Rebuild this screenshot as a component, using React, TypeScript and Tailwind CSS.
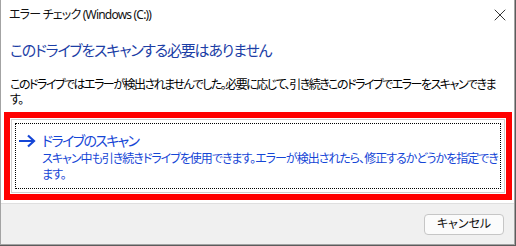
import { X } from 'lucide-react'

function Arrow() {
  return (
    <svg width="18" height="14" viewBox="0 0 18 14" className="shrink-0 mt-[4px]">
      <path d="M1 7h15M10 1.5L16 7l-6 5.5" fill="none" stroke="#1546d6" strokeWidth="2.2" />
    </svg>
  )
}

export default function App() {
  return (
    <div className="w-[516px] h-[246px] overflow-hidden bg-[#5c5c5c] font-['Noto_Sans','Noto_Sans_CJK_JP',sans-serif] [font-feature-settings:'palt'] text-black">
      <div className="w-[515px] h-[245px] bg-white border-l border-r border-b border-[#a3a3a3] flex flex-col">
        {/* title bar */}
        <div className="h-[30px] shrink-0 flex items-center justify-between pl-[8px] pr-[4px]">
          <span className="text-[12px] leading-none tracking-[-0.8px] text-[#111]">エラー チェック (Windows (C:))</span>
          <X className="w-[20px] h-[20px] text-[#222]" strokeWidth={1.1} />
        </div>

        {/* content */}
        <div className="flex-1 min-w-0 pl-[9px] pt-[10px]">
          <h1 className="text-[15px] leading-[21px] tracking-[-1.2px] text-[#1c3ea6] whitespace-nowrap">このドライブをスキャンする必要はありません</h1>
          <p className="mt-[16px] text-[12px] leading-[15px] tracking-[-1.5px]">
            <span className="block whitespace-nowrap">このドライブではエラーが検出されませんでした。必要に応じて、引き続きこのドライブでエラーをスキャンできま</span>
            <span className="block">す。</span>
          </p>

          <div className="mt-[5px] ml-[-6px] w-[508px] h-[88px] border-[6px] border-[#ff0000] p-[1px] flex">
            <div className="flex-1 min-w-0 border border-[#cfcfcf] p-[3px] flex">
              <div className="flex-1 min-w-0 overflow-hidden border border-dotted border-black pl-[2px] pt-[6px] flex gap-[6px] text-[#1546d6]">
                <Arrow />
                <div className="flex flex-col min-w-0">
                  <span className="text-[14px] leading-[21px] tracking-[-1.6px] whitespace-nowrap">ドライブのスキャン</span>
                  <span className="text-[12px] leading-[16px] tracking-[-1px] whitespace-nowrap">スキャン中も引き続きドライブを使用できます。エラーが検出されたら、修正するかどうかを指定でき</span>
                  <span className="text-[12px] leading-[16px] tracking-[-1px]">ます。</span>
                </div>
              </div>
            </div>
          </div>
        </div>

        {/* footer */}
        <div className="h-[41px] shrink-0 border-t border-[#dfdfdf] bg-[#f0f0f0] flex items-center justify-end pr-[10px]">
          <button className="w-[80px] h-[21px] rounded-[4px] border border-[#c6c6c6] bg-[#fbfbfb] text-[12px] leading-none text-[#111]">
            キャンセル
          </button>
        </div>
      </div>
    </div>
  )
}
